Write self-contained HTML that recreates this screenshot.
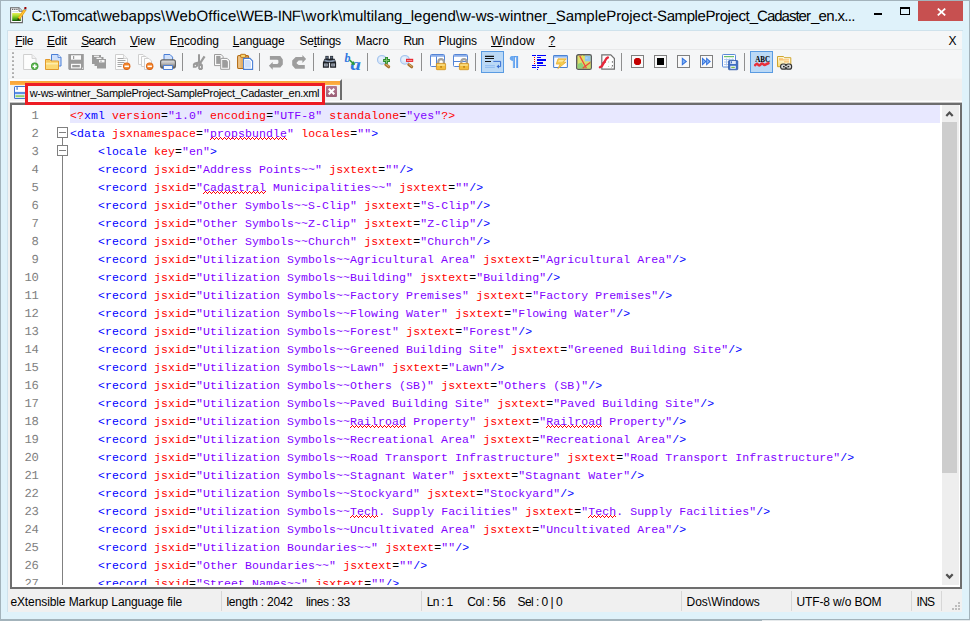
<!DOCTYPE html>
<html><head><meta charset="utf-8"><title>Notepad++</title>
<style>
*{box-sizing:border-box;margin:0;padding:0}
html,body{width:970px;height:621px;overflow:hidden}
body{background:#dff2fa;font-family:"Liberation Sans",sans-serif;position:relative;color:#000}
.abs{position:absolute}
#frame{left:0;top:0;width:970px;height:621px;border:1px solid #a3b3bb;border-bottom-width:2px;pointer-events:none}
#title{left:31.400px;top:5px;font-size:15px;letter-spacing:-.18px;line-height:22px;white-space:nowrap;color:#000}
#appicon{left:10px;top:7px}
#btnclose{left:918px;top:1px;width:45px;height:20px;background:#c75050}
#client{left:8px;top:31px;width:954px;height:581px;background:#f0f0f0;overflow:hidden}
#menubar{left:0;top:0;width:954px;height:19px;background:#f5f6f7;border-bottom:1px solid #e8e9ea}
#menubar span{position:absolute;top:3px;font-size:12px;line-height:15px;white-space:nowrap}
#menubar span em{font-style:normal;text-decoration:underline}
#toolbar{left:0;top:19px;width:954px;height:28px;background:#f5f6f7}
.ic{position:absolute;overflow:visible}
.sep{position:absolute;top:3px;width:1px;height:18px;background:#8f8f8f}
.grip{position:absolute;left:4px;top:2px;width:2px;height:26px;background:repeating-linear-gradient(#c6c6c6 0,#a4a4a4 2px,transparent 2px,transparent 4px)}
.pressed{position:absolute;top:1px;width:23px;height:22px;background:#bbd9f6;border:1px solid #5a9be2}
#tabbar{left:0;top:47px;width:954px;height:25px;background:#f0f0f0;box-shadow:inset 0 1px 0 #f3f4f4}
#tabline{left:2px;top:22px;width:952px;height:3px;background:linear-gradient(#f6f6f6 0,#f6f6f6 1px,#fff 1px,#fff 2px,#c4c4c4 2px)}
#tab{left:1px;top:1px;width:333px;height:23px;background:#f2f3f3;border-right:2px solid #6c6c6c;border-left:1px solid #fcfcfc;border-top:2px solid #fdfdfd}
#tabtop{left:2px;top:3px;width:330px;height:4px;background:linear-gradient(#f9a63a,#fca93c 60%,#ffb64f)}
#tabtxt{left:21.700px;top:8px;font-size:11px;letter-spacing:-.3px;line-height:14px;white-space:nowrap;color:#000}
#redbox{left:17px;top:5px;width:300px;height:22px;border:3px solid #ed1c24;z-index:5}
#tabclose{left:318px;top:8px;width:11px;height:11px;background:linear-gradient(#b47a92,#9a5d74);border-radius:1px}
#editor{left:2px;top:72px;width:952px;height:486px;background:#fff;border:2px solid #6e6e6e;overflow:hidden}
#view{left:0;top:0;width:947px;height:480px;overflow:hidden}
#hl{left:58px;top:0;width:870px;height:18px;background:#e8e8ff}
#code{position:absolute;left:0;top:2px;width:929px;font-family:"Liberation Mono",monospace;font-size:11.5px;letter-spacing:.1px;line-height:18px;white-space:pre;color:#000}
.ln{height:18px;padding-left:58px;position:relative}
.ln .n{position:absolute;left:0;top:0;width:26.4px;text-align:right;color:#808080;font-size:12.2px;letter-spacing:-.32px;text-rendering:geometricPrecision}
.ln b{font-weight:normal;color:#0000ff}
.ln s{text-decoration:none;color:#ff0000}
.ln i{font-style:normal;color:#8000ff}
.ln u{text-decoration:none}
.sq{position:absolute;height:3px;background:
 linear-gradient(90deg,transparent 2px,#ff0000 2px,#ff0000 3px,transparent 3px) 0 0/4px 1px repeat-x,
 linear-gradient(90deg,transparent 1px,#ff0000 1px,#ff0000 2px,transparent 2px,transparent 3px,#ff0000 3px) 0 1px/4px 1px repeat-x,
 linear-gradient(90deg,#ff0000 1px,transparent 1px) 0 2px/4px 1px repeat-x}
#vscroll{left:930px;top:0;width:17px;height:480px;background:#eeeeee}
#thumb{left:0;top:17px;width:15px;height:351px;background:#cdcdcd}
#fold{left:45px;top:0;width:12px;height:482px}
#status{left:0;top:558px;height:23px;width:954px;height:23px;background:#f0f0f0;font-size:12px;line-height:15px}
#status span{position:absolute;top:6px;white-space:nowrap}
#status i{position:absolute;top:2px;width:1px;height:20px;background:#d7d7d7}
</style></head><body>
<svg id="appicon" class="abs" width="18" height="17" viewBox="0 0 18 17"><defs><linearGradient id="gg" x1="0" y1="0" x2="0" y2="1"><stop offset="0" stop-color="#e8ec58"/><stop offset=".35" stop-color="#a6dc2c"/><stop offset=".8" stop-color="#3c9a10"/><stop offset="1" stop-color="#0c4a04"/></linearGradient></defs><path d="M.6 .8h8.400l3.400 3.400v11.400h-11.800z" fill="#fff" stroke="#666" stroke-width="1.100"/><path d="M9 .8v3.400h3.400" fill="#f2f2f2" stroke="#666" stroke-width="1"/><path d="M2.200 2.400h1.100M4.300 2.400h1.100M6.400 2.400h1.100" stroke="#444" stroke-width="1.200"/><path d="M2.400 4.600h5.800" stroke="#c4ccd8" stroke-width=".8"/><rect x="2.200" y="6" width="8.600" height="8" fill="url(#gg)"/><path d="M15.400 2.200l-6.600 9.600" stroke="#f5a80a" stroke-width="2.700"/><path d="M14.700 3.300l-5.300 7.700" stroke="#ffd45a" stroke-width=".8"/><path d="M13.900 2.200l2 1.400.8-1.200-2-1.400z" fill="#7c9cc8"/><rect x="14.400" y="0" width="2" height="2" fill="#9c0000"/><path d="M7.800 11l1.900 1.300-2.300 1.200z" fill="#3a2a10"/></svg>
<svg class="abs" style="left:0;top:0" width="870" height="30" font-family="Liberation Sans" font-size="15" text-rendering="geometricPrecision" fill="#000"><text x="31.4" y="20.8" textLength="65.4" lengthAdjust="spacing">C:\Tomcat</text><text x="96.8" y="20.8" textLength="64.3" lengthAdjust="spacing">\webapps</text><text x="161.1" y="20.8" textLength="75.2" lengthAdjust="spacing">\WebOffice</text><text x="236.3" y="20.8" textLength="64.7" lengthAdjust="spacing">\WEB-INF</text><text x="301.0" y="20.8" textLength="37.3" lengthAdjust="spacing">\work</text><text x="338.3" y="20.8" textLength="117.5" lengthAdjust="spacing">\multilang_legend</text><text x="455.8" y="20.8" textLength="99.9" lengthAdjust="spacing">\w-ws-wintner_</text><text x="555.7" y="20.8" textLength="96.8" lengthAdjust="spacing">SampleProject</text><text x="652.5" y="20.8" textLength="97.2" lengthAdjust="spacing">-SampleProject</text><text x="749.7" y="20.8" textLength="61.2" lengthAdjust="spacing">_Cadaster</text><text x="810.9" y="20.8" textLength="44.6" lengthAdjust="spacing">_en.x...</text></svg>
<div class="abs" style="left:874px;top:13px;width:8px;height:2px;background:#000"></div>
<div class="abs" style="left:900px;top:7px;width:10px;height:8px;border:1px solid #000;border-top-width:2px"></div>
<div id="btnclose" class="abs"><svg class="abs" style="left:18.500px;top:6.500px" width="9" height="8" viewBox="0 0 9 8"><path d="M.8 .6l7.400 6.800M8.200 .6l-7.400 6.800" stroke="#fff" stroke-width="1.800"/></svg></div>
<div id="client" class="abs">
 <div id="menubar" class="abs">
  <span style="left:7.200px;letter-spacing:-.34px"><em>F</em>ile</span>
  <span style="left:38.900px;letter-spacing:-.17px"><em>E</em>dit</span>
  <span style="left:73.200px;letter-spacing:-.67px"><em>S</em>earch</span>
  <span style="left:122px;letter-spacing:-.2px"><em>V</em>iew</span>
  <span style="left:161.400px;letter-spacing:-.07px">E<em>n</em>coding</span>
  <span style="left:224.800px;letter-spacing:-.21px"><em>L</em>anguage</span>
  <span style="left:291.600px;letter-spacing:-.27px">Se<em>t</em>tings</span>
  <span style="left:347.800px;letter-spacing:-.07px">Macro</span>
  <span style="left:395.600px;letter-spacing:-.67px">Run</span>
  <span style="left:430.600px;letter-spacing:-.17px">Plugins</span>
  <span style="left:483px;letter-spacing:.22px"><em>W</em>indow</span>
  <span style="left:540.600px"><em>?</em></span>
  <span style="left:940.400px">X</span>
 </div>
 <div id="toolbar" class="abs">
<div class="grip"></div>
<div class="pressed" style="left:473px"></div><div class="pressed" style="left:742px"></div>
<div class="sep" style="left:174px"></div>
<div class="sep" style="left:251px"></div>
<div class="sep" style="left:305px"></div>
<div class="sep" style="left:359px"></div>
<div class="sep" style="left:413px"></div>
<div class="sep" style="left:467px"></div>
<div class="sep" style="left:613px"></div>
<div class="sep" style="left:736px"></div>
<svg class="ic" style="left:15px;top:4px" width="16" height="16" viewBox="0 0 16 16"><path d="M.6 .5h8.400l4 4v11h-12.400z" fill="#fdfdfd" stroke="#cfcfcf"/><path d="M9 .5v4h4" fill="#f1f1f1" stroke="#d6d6d6"/>
<circle cx="11.7" cy="12.3" r="3.7" fill="#3f9a36"/><circle cx="11.7" cy="12.3" r="3.1" fill="#58b04a"/><path d="M11.7 10.2v4.2M9.6 12.3h4.2" stroke="#fff" stroke-width="1.5"/></svg>
<svg class="ic" style="left:37px;top:4px" width="16" height="16" viewBox="0 0 16 16"><path d="M6.500 .5h6.500l3 3v8.500h-9.500z" fill="#cfe0fb" stroke="#4b7fd6"/><path d="M13 .5v3h3" fill="#e9f1ff" stroke="#4b7fd6" stroke-width=".8"/>
<path d="M.5 5.5h4.5l1 1.5h7.5v8.5h-13z" fill="#fbd873" stroke="#e29a2c"/><path d="M1 9h12v1.5h-12z" fill="#fff1b8" opacity=".8"/><path d="M1.5 6.5h3l.8 1h-3.8z" fill="#f4b648"/></svg>
<svg class="ic" style="left:60px;top:4px" width="16" height="16" viewBox="0 0 16 16"><path d="M.3 0h15.500v16h-14.500l-1-1z" fill="#9b9b9b"/><rect x="3" y="1.3" width="10" height="4.4" fill="#fafafa"/><rect x="5" y="2" width="1.2" height="3" fill="#9b9b9b"/>
<rect x="3" y="9.8" width="10" height="4.6" fill="#fafafa"/><rect x="4.2" y="11" width="7.6" height="2.3" fill="#9b9b9b"/><rect x="14" y="13.7" width="1" height="1" fill="#fff"/></svg>
<svg class="ic" style="left:84px;top:4px" width="16" height="16" viewBox="0 0 16 16"><g fill="#9b9b9b"><rect x="0" y="1" width="9" height="9"/><rect x="2.5" y="3" width="9" height="9"/><rect x="5" y="5" width="9" height="9.5"/></g>
<rect x="2" y="1.7" width="5" height="1.2" fill="#f4f4f4"/><rect x="4.5" y="3.7" width="5" height="1.3" fill="#f4f4f4"/><rect x="7" y="6" width="5.5" height="2.4" fill="#f7f7f7"/><rect x="8.5" y="6.5" width="1" height="1.5" fill="#9b9b9b"/></svg>
<svg class="ic" style="left:107px;top:4px" width="16" height="16" viewBox="0 0 16 16"><path d="M.5 .5h8l4 4v11h-12z" fill="#fdfdfd" stroke="#cfcfcf"/><path d="M8.500 .5v4h4" fill="#f1f1f1" stroke="#d6d6d6"/>
<path d="M2.5 4.500h6M2.500 6.500h8M2.500 8.500h7M2.500 10.500h5M2.500 12.500h4" stroke="#9d9d9d" stroke-width=".9"/>
<circle cx="11.700" cy="12.3" r="3.7" fill="#d95e10"/><circle cx="11.7" cy="12.100" r="3" fill="#f08228"/><rect x="9.5" y="11.5" width="4.4" height="1.600" fill="#fff"/></svg>
<svg class="ic" style="left:130px;top:4px" width="16" height="16" viewBox="0 0 16 16"><g fill="#fdfdfd" stroke="#cfcfcf"><path d="M.5 .5h4.500l2.500 2.500v7.500h-7z"/><path d="M3.500 2.500h4.500l2.500 2.500v7.500h-7z"/><path d="M6.500 4.500h4.500l2.500 2.500v8.500h-7z"/></g>
<circle cx="11.700" cy="12.300" r="3.700" fill="#d95e10"/><circle cx="11.700" cy="12.100" r="3" fill="#f08228"/><rect x="9.500" y="11.500" width="4.400" height="1.600" fill="#fff"/></svg>
<svg class="ic" style="left:152px;top:4px" width="16" height="16" viewBox="0 0 16 16"><defs><linearGradient id="prg" x1="0" y1="0" x2="0" y2="1"><stop offset="0" stop-color="#e6e6e6"/><stop offset=".45" stop-color="#b8b8b8"/><stop offset=".7" stop-color="#8c8c8c"/><stop offset="1" stop-color="#4a4a4a"/></linearGradient></defs>
<path d="M4 .5h6l2.600 2.600v4.400h-8.600z" fill="#cfe0fb" stroke="#4b7fd6"/>
<rect x=".6" y="5.900" width="14.800" height="8.200" rx="2" fill="url(#prg)" stroke="#606060" stroke-width="1.100"/>
<path d="M3.500 11.500h9v4h-9z" fill="#f4f8ff" stroke="#4b7fd6"/></svg>
<svg class="ic" style="left:183px;top:4px" width="16" height="16" viewBox="0 0 16 16"><g fill="#9a9a9a"><path d="M7 .2h2v9.600h-2z"/><path d="M12.600 1.700l1.900 1.300-4.500 6.800-1.800-1.200z"/>
<path d="M7.400 7.400l-3.800 1.200-1.700 1.400v3.700h3.100l2.400-1.700z"/><path d="M7.200 9.200l3-.2 1.700 1.800v4l-1.100 1.100h-2.600l-1-1.300z"/></g>
<circle cx="4.300" cy="11.500" r=".65" fill="#f5f6f7"/><ellipse cx="9.500" cy="13" rx=".6" ry=".95" fill="#f5f6f7"/></svg>
<svg class="ic" style="left:206px;top:4px" width="16" height="16" viewBox="0 0 16 16"><path d="M.5 .5h6.700l1.900 2.100v9h-8.600z" fill="#fafafa" stroke="#9d9d9d"/><path d="M2.200 1.900h4.300v8h-4.300z" fill="#9d9d9d"/>
<path d="M6.700 4.400h6.500l2.400 2.400v8.500h-8.900z" fill="#fafafa" stroke="#9d9d9d"/><path d="M8.200 6.100h4.200l1.500 1.500v6.200h-5.700z" fill="#9d9d9d"/></svg>
<svg class="ic" style="left:229px;top:4px" width="16" height="16" viewBox="0 0 16 16"><defs><linearGradient id="pg" x1="0" x2="1"><stop offset="0" stop-color="#f4d29c"/><stop offset=".4" stop-color="#e3ad66"/><stop offset="1" stop-color="#d49446"/></linearGradient></defs>
<rect x=".6" y="1.500" width="11" height="13" rx="1.300" fill="url(#pg)" stroke="#b36b14" stroke-width="1.100"/><rect x="3.400" y=".3" width="5.400" height="3" rx=".9" fill="#e9a23a" stroke="#b36b14" stroke-width=".8"/><rect x="4.300" y="1.100" width="3.600" height="1.700" fill="#fbe27a"/>
<path d="M6.600 4.400h6.400l2.600 2.600v8.400h-9z" fill="#fff" stroke="#4a7fd6" stroke-width="1.100"/><path d="M8 6h4.300l1.700 1.700v6.100h-6z" fill="#cfe0fc"/></svg>
<svg class="ic" style="left:260px;top:4px" width="16" height="16" viewBox="0 0 16 16"><path d="M1.900 1.900H12.300L14.800 5.400V10.400L12.300 13.400H4.700V15.800L.9 11.800L4.700 8.100V9.900H9.400L10.400 8.900V6.600L9.400 5.700H1.900Z" fill="#9d9d9d"/></svg>
<svg class="ic" style="left:283px;top:4px" width="16" height="16" viewBox="0 0 16 16"><path d="M11.400 .9L15.100 4.900L11.400 8.900V6.600H7.700L5.700 8.400V9.400L7.700 11.100H13.800V14.800H4.200L1.200 11.300V6.400L4.700 2.900H11.400Z" fill="#9d9d9d"/></svg>
<svg class="ic" style="left:314px;top:4px" width="16" height="16" viewBox="0 0 16 16"><g fill="#1d2127"><rect x="3.400" y="1.900" width="3.200" height="4"/><rect x="8.100" y="1.900" width="3" height="4"/><path d="M2.500 4.800h10.200l1.400 3.600v5.400h-6v-5h-1.200v5h-6v-5.400z"/></g>
<path d="M3.900 2.500h2.200v2h-2.200zM8.600 2.500h2v2h-2z" fill="#5d6b7e"/><path d="M2.700 5.600q4.800 2 9.800 0l.6 1.600q-5.500 1.800-11 0z" fill="#8797ad"/>
<rect x="2" y="9.500" width="3.800" height="2.900" fill="#a9b1bc"/><rect x="9.200" y="9.500" width="3.800" height="2.900" fill="#a9b1bc"/><path d="M3.200 9.500v2.900M4.600 9.500v2.900M10.400 9.500v2.900M11.800 9.500v2.900" stroke="#5a626e" stroke-width=".6"/></svg>
<svg class="ic" style="left:337px;top:4px" width="16" height="16" viewBox="0 0 16 16"><text x="-.4" y="8" font-family="Liberation Serif" font-style="italic" font-weight="bold" font-size="12" fill="#2f78e0">b</text>
<text x="5.600" y="15.600" font-family="Liberation Serif" font-style="italic" font-weight="bold" font-size="17" fill="#2f78e0" textLength="10.400" lengthAdjust="spacingAndGlyphs">a</text>
<path d="M4.600 6.200l3.400 3" stroke="#2e9a3a" stroke-width="1.600"/><path d="M5.700 10.600l4.200.4-1-4.100z" fill="#2e9a3a"/></svg>
<svg class="ic" style="left:368px;top:4px" width="16" height="16" viewBox="0 0 16 16"><path d="M9.800 10.600l2.900 2.200" stroke="#a8722e" stroke-width="3" stroke-linecap="round"/><path d="M10 10.300l2.900 2.200" stroke="#dcae6c" stroke-width="1" stroke-linecap="round"/>
<circle cx="5.900" cy="5.850" r="4.400" fill="#d6e5f8" stroke="#a4c4ee" stroke-width="1.100"/><circle cx="5.200" cy="5.200" r="2.400" fill="#e6effb"/>
<path d="M7.100 5.100h2v-2.100h2.900v2.100h2v2.800h-2v1.800h-2.900v-1.800h-2z" fill="#2b8a2b"/><path d="M7.900 6.500h5.300M10.550 3.800v5.100" stroke="#7cc46e" stroke-width="1.100"/></svg>
<svg class="ic" style="left:391px;top:4px" width="16" height="16" viewBox="0 0 16 16"><path d="M9.800 10.600l2.900 2.200" stroke="#a8722e" stroke-width="3" stroke-linecap="round"/><path d="M10 10.300l2.900 2.200" stroke="#dcae6c" stroke-width="1" stroke-linecap="round"/>
<circle cx="5.900" cy="5.850" r="4.400" fill="#d6e5f8" stroke="#a4c4ee" stroke-width="1.100"/><circle cx="5.200" cy="5.200" r="2.400" fill="#e6effb"/>
<rect x="7" y="4.800" width="7.200" height="3.100" fill="#e8222c"/><rect x="7.900" y="5.900" width="5.400" height="1" fill="#ff9a9a"/></svg>
<svg class="ic" style="left:422px;top:4px" width="16" height="16" viewBox="0 0 16 16"><rect x=".5" y=".5" width="14" height="12" rx="1" fill="#fff" stroke="#5585d6"/><rect x="1" y="1" width="13" height="1.800" fill="#8eb0ea"/><path d="M6.500 2.500v10" stroke="#5585d6"/><path d="M8.300 9.700v-1.700a2.800 2.800 0 0 1 5.600 0v1.700" fill="none" stroke="#a2a2a2" stroke-width="2.200"/><rect x="6.400" y="9.400" width="9.200" height="6.300" rx=".6" fill="#f2bc3c" stroke="#d0901a" stroke-width=".8"/><rect x="7.200" y="10.300" width="7.600" height="1.500" fill="#fbe08a"/><rect x="10.300" y="12" width="1.500" height="1.800" fill="#b87d10"/></svg>
<svg class="ic" style="left:445px;top:4px" width="16" height="16" viewBox="0 0 16 16"><rect x=".5" y=".5" width="14" height="12" rx="1" fill="#fff" stroke="#5585d6"/><rect x="1" y="1" width="13" height="1.800" fill="#8eb0ea"/><path d="M.5 7.500h14" stroke="#5585d6"/><path d="M8.300 9.700v-1.700a2.800 2.800 0 0 1 5.600 0v1.700" fill="none" stroke="#a2a2a2" stroke-width="2.200"/><rect x="6.400" y="9.400" width="9.200" height="6.300" rx=".6" fill="#f2bc3c" stroke="#d0901a" stroke-width=".8"/><rect x="7.200" y="10.300" width="7.600" height="1.500" fill="#fbe08a"/><rect x="10.300" y="12" width="1.500" height="1.800" fill="#b87d10"/></svg>
<svg class="ic" style="left:477px;top:4px" width="16" height="16" viewBox="0 0 16 16"><path d="M0 2.400h9M0 4.500h9M0 7.500h6" stroke="#151515" stroke-width="1.100"/><path d="M8.300 7.400h7.300v5.200h-2" fill="none" stroke="#3a6fd0" stroke-width="1"/><path d="M11.500 12.500l2.500-2v4z" fill="#3a6fd0"/><rect x="0" y="11.200" width="9.800" height="2.700" fill="#8fbcf0"/><rect x="0" y="12.200" width="9.800" height=".7" fill="#c4dcf8"/></svg>
<svg class="ic" style="left:499px;top:4px" width="16" height="16" viewBox="0 0 16 16"><path d="M5.900 1.900h5.200v12.200h-2v-10.800h-1.200v10.800h-2z" fill="#5a9cec"/><path d="M6.300 1.900a2.900 2.400 0 0 0 0 4.800z" fill="#5a9cec"/><path d="M6.300 1.900h-.5a3 2.400 0 0 0 0 4.800h.5z" fill="#6aa8f0"/><path d="M6.500 2.400v11.400M9.700 2.400v11.400" stroke="#8fc0f8" stroke-width=".6"/></svg>
<svg class="ic" style="left:522px;top:4px" width="16" height="16" viewBox="0 0 16 16"><g fill="#0000ff" shape-rendering="crispEdges"><rect x="2" y="1" width="4" height="1"/><rect x="7" y="1" width="9" height="1"/><rect x="7" y="3" width="4" height="1"/><rect x="7" y="5" width="9" height="2"/><rect x="7" y="8" width="6" height="2"/><rect x="2" y="11" width="4" height="1"/><rect x="7" y="11" width="9" height="1"/><rect x="2" y="13" width="4" height="1"/><rect x="7" y="13" width="2" height="1"/><rect x="7" y="15" width="1" height="1"/></g>
<g fill="#ff0000" shape-rendering="crispEdges"><rect x="4" y="3" width="1" height="1"/><rect x="4" y="5" width="1" height="1"/><rect x="4" y="7" width="1" height="1"/><rect x="4" y="9" width="1" height="1"/></g></svg>
<svg class="ic" style="left:545px;top:4px" width="16" height="16" viewBox="0 0 16 16"><rect x=".6" y="1.500" width="13.800" height="12" rx=".8" fill="#fdfdfd" stroke="#4a82d4" stroke-width="1.100"/><rect x="1.100" y="2" width="12.800" height="1.600" fill="#8ab4ee"/>
<path d="M5 4.800h8.300l-3 3.400h2.700l-8.200 6.500 2.400-4.600h-4z" fill="#f4cc52" stroke="#e2a62c" stroke-width=".7"/><path d="M6 6h5l-1.600 1.800h-4.600z" fill="#fbe69a"/></svg>
<svg class="ic" style="left:568px;top:4px" width="16" height="16" viewBox="0 0 16 16"><rect x=".7" y=".7" width="14.600" height="14.600" rx="1.600" fill="#dce06c" stroke="#5b5b5e" stroke-width="1.400"/><rect x="8.900" y="1.700" width="5.600" height="5.600" fill="#90c4ee"/><path d="M1.500 10l4-1.500 4 6h-8z" fill="#8fd07a"/><rect x="9.500" y="9" width="5" height="5.500" fill="#c9dc6a"/><path d="M6.500 1.500v5" stroke="#e8e050" stroke-width="1"/><rect x="9.500" y="3" width="2" height="2" fill="#a8d4f4"/>
<path d="M3.700 1.900l6.700 12.300M14.100 8.600l-7.400 5.600" stroke="#ee4a3c" stroke-width="1.300" fill="none"/></svg>
<svg class="ic" style="left:591px;top:4px" width="16" height="16" viewBox="0 0 16 16"><path d="M2.800 .9h9l3.600 3.600v10.600h-12.600z" fill="#fdfdfd" stroke="#707070" stroke-width="1.200"/>
<path d="M13.400 7.200v2M13.400 11v1.800l-1 .6" stroke="#555" stroke-width=".9" fill="none" stroke-dasharray="1.500 1"/><path d="M9.600 7.500v1M9.600 12v1" stroke="#9c9" stroke-width=".9"/>
<path d="M.9 13.200l1.800-.9 4.700-7.800 1.500-1" fill="none" stroke="#e6283a" stroke-width="2.400" stroke-linecap="round" stroke-linejoin="round"/><path d="M3.200 9.200l3.600-1.400" stroke="#e6283a" stroke-width="1.500"/></svg>
<svg class="ic" style="left:623px;top:5px" width="13" height="13" viewBox="0 0 13 13"><rect x=".5" y=".5" width="12" height="12" fill="#f9f9f9" stroke="#7f7f7f"/><path d="M4.800 3h3.400l1.800 1.800v3.400l-1.800 1.800h-3.400l-1.800-1.800v-3.400z" fill="#c40000"/></svg>
<svg class="ic" style="left:646px;top:5px" width="13" height="13" viewBox="0 0 13 13"><rect x=".5" y=".5" width="12" height="12" fill="#f9f9f9" stroke="#7f7f7f"/><rect x="3" y="3" width="7" height="7" fill="#000"/></svg>
<svg class="ic" style="left:669px;top:5px" width="13" height="13" viewBox="0 0 13 13"><rect x=".5" y=".5" width="12" height="12" fill="#f9f9f9" stroke="#7f7f7f"/><path d="M4.800 2.200l5.300 4.300-5.300 4.300z" fill="#2f6fdc"/><path d="M5.700 4.200l2.900 2.300-2.900 2.300z" fill="#7fb0f4"/></svg>
<svg class="ic" style="left:692px;top:5px" width="13" height="13" viewBox="0 0 13 13"><rect x=".5" y=".5" width="12" height="12" fill="#f9f9f9" stroke="#7f7f7f"/><path d="M2 2.200l4.600 4.300-4.600 4.300z" fill="#2f6fdc"/><path d="M6.100 2.200l4.800 4.300-4.800 4.300z" fill="#2f6fdc"/><path d="M2.800 4.200l2.400 2.300-2.400 2.300z" fill="#7fb0f4"/><path d="M6.900 4.200l2.500 2.300-2.500 2.300z" fill="#7fb0f4"/></svg>
<svg class="ic" style="left:714px;top:4px" width="16" height="16" viewBox="0 0 16 16"><rect x=".5" y=".5" width="13" height="12.500" rx=".8" fill="#fdfdfd" stroke="#5a8ad8"/><rect x="2" y="2" width="10" height="1.200" fill="#6cc06c"/>
<path d="M2 5.500h10M2 8h10M2 10.500h5M4.500 4.500v7M7.500 4.500v7M10.500 4.500v3" stroke="#a9c4ee" stroke-width=".9"/>
<rect x="6.500" y="6.500" width="9.300" height="9.300" rx=".8" fill="#3f6ec2" stroke="#2c55a4" stroke-width=".7"/><rect x="8.300" y="7" width="5.500" height="3" fill="#dfe9fa"/><rect x="9" y="7.300" width="1" height="2" fill="#3f6ec2"/><rect x="8.300" y="11.800" width="5.500" height="3" fill="#eef3fc"/><rect x="9.300" y="12.800" width="3.500" height="1.200" fill="#7cc24e"/></svg>
<svg class="ic" style="left:746px;top:4px" width="16" height="16" viewBox="0 0 16 16"><text x="1.200" y="7.700" font-family="Liberation Serif" font-weight="bold" font-size="8.600" fill="#000" textLength="15" lengthAdjust="spacingAndGlyphs">ABC</text>
<path d="M1.200 11.200q1.300-2.400 2.700-.6t2.700 0 2.600-.5 2.600.4 2.700-1.300" fill="none" stroke="#e8303a" stroke-width="2.500" stroke-linecap="round"/></svg>
<svg class="ic" style="left:769px;top:4px" width="16" height="16" viewBox="0 0 16 16"><defs><linearGradient id="flg" x1="1" y1="0" x2="0" y2="1"><stop offset="0" stop-color="#fffdf2"/><stop offset=".6" stop-color="#fdf0c0"/><stop offset="1" stop-color="#f8d66a"/></linearGradient></defs>
<path d="M.5 2.500h6l1 1.200h6.300v9h-13.300z" fill="url(#flg)" stroke="#cfa62e"/><path d="M2 4.900h4M2 5.900h10M7 7.900h5" stroke="#fbb45a" stroke-width="1"/>
<rect x="3.600" y="10" width="5.800" height="5.200" rx="2.300" fill="#dcdcdc" stroke="#333" stroke-width="1.200"/><rect x="8.800" y="10" width="5.800" height="5.200" rx="2.300" fill="#dcdcdc" stroke="#333" stroke-width="1.200"/><rect x="6" y="11.900" width="6.200" height="1.400" fill="#222"/><rect x="7.600" y="12.200" width="3" height=".8" fill="#f4f4f4"/></svg>
 </div>
 <div id="tabbar" class="abs">
  <div id="tab" class="abs"></div>
  <div id="tabtop" class="abs"></div>
  <svg class="abs" style="left:6px;top:8px" width="12" height="13" viewBox="0 0 12 12" preserveAspectRatio="none"><rect x=".5" y=".5" width="11" height="11" rx="1" fill="#e9f1fc" stroke="#3f74d1"/><rect x="1" y="1" width="10" height="4" fill="#fff"/><rect x="2.500" y="1" width="1.200" height="2.500" fill="#3f74d1"/><rect x="1" y="5.500" width="10" height="2" fill="#5a8fe6"/><rect x="1.500" y="8.500" width="9" height="1.800" fill="#8fcf6a"/></svg>
  <div id="tabtxt" class="abs">w-ws-wintner_SampleProject-SampleProject_Cadaster_en.xml</div>
  <div id="tabclose" class="abs"><svg class="abs" style="left:2px;top:2px" width="7" height="7" viewBox="0 0 7 7"><path d="M.7 .7l5.600 5.600M6.300 .7l-5.600 5.600" stroke="#fff" stroke-width="2.100"/></svg></div>
  <div id="tabline" class="abs"></div>
  <div id="redbox" class="abs"></div>
 </div>
 <div id="editor" class="abs"><div id="view" class="abs">
  <div id="hl" class="abs"></div>
  <svg id="fold" class="abs" viewBox="0 0 12 482" shape-rendering="crispEdges"><g fill="#fff" stroke="#808080"><path d="M5.500 33v449"/><rect x=".5" y="22.500" width="10" height="10"/><rect x=".5" y="40.500" width="10" height="10"/></g><path d="M2 27.500h7M2 45.500h7" stroke="#808080"/></svg>
  <div id="code"><div class="ln cur"><span class="n">1</span><s>&lt;?</s><b>xml</b> <s>version</s>=<i>"1.0"</i> <s>encoding</s>=<i>"UTF-8"</i> <s>standalone</s>=<i>"yes"</i><s>?&gt;</s></div><div class="ln"><span class="n">2</span><b>&lt;data</b> <s>jsxnamespace</s>=<i>"<u>propsbundle</u>"</i> <s>locales</s>=<i>""</i><b>&gt;</b></div><div class="ln"><span class="n">3</span>    <b>&lt;locale</b> <s>key</s>=<i>"en"</i><b>&gt;</b></div><div class="ln"><span class="n">4</span>    <b>&lt;record</b> <s>jsxid</s>=<i>"Address Points~~"</i> <s>jsxtext</s>=<i>""</i><b>/&gt;</b></div><div class="ln"><span class="n">5</span>    <b>&lt;record</b> <s>jsxid</s>=<i>"<u>Cadastral</u> Municipalities~~"</i> <s>jsxtext</s>=<i>""</i><b>/&gt;</b></div><div class="ln"><span class="n">6</span>    <b>&lt;record</b> <s>jsxid</s>=<i>"Other Symbols~~S-Clip"</i> <s>jsxtext</s>=<i>"S-Clip"</i><b>/&gt;</b></div><div class="ln"><span class="n">7</span>    <b>&lt;record</b> <s>jsxid</s>=<i>"Other Symbols~~Z-Clip"</i> <s>jsxtext</s>=<i>"Z-Clip"</i><b>/&gt;</b></div><div class="ln"><span class="n">8</span>    <b>&lt;record</b> <s>jsxid</s>=<i>"Other Symbols~~Church"</i> <s>jsxtext</s>=<i>"Church"</i><b>/&gt;</b></div><div class="ln"><span class="n">9</span>    <b>&lt;record</b> <s>jsxid</s>=<i>"Utilization Symbols~~Agricultural Area"</i> <s>jsxtext</s>=<i>"Agricultural Area"</i><b>/&gt;</b></div><div class="ln"><span class="n">10</span>    <b>&lt;record</b> <s>jsxid</s>=<i>"Utilization Symbols~~Building"</i> <s>jsxtext</s>=<i>"Building"</i><b>/&gt;</b></div><div class="ln"><span class="n">11</span>    <b>&lt;record</b> <s>jsxid</s>=<i>"Utilization Symbols~~Factory Premises"</i> <s>jsxtext</s>=<i>"Factory Premises"</i><b>/&gt;</b></div><div class="ln"><span class="n">12</span>    <b>&lt;record</b> <s>jsxid</s>=<i>"Utilization Symbols~~Flowing Water"</i> <s>jsxtext</s>=<i>"Flowing Water"</i><b>/&gt;</b></div><div class="ln"><span class="n">13</span>    <b>&lt;record</b> <s>jsxid</s>=<i>"Utilization Symbols~~Forest"</i> <s>jsxtext</s>=<i>"Forest"</i><b>/&gt;</b></div><div class="ln"><span class="n">14</span>    <b>&lt;record</b> <s>jsxid</s>=<i>"Utilization Symbols~~Greened Building Site"</i> <s>jsxtext</s>=<i>"Greened Building Site"</i><b>/&gt;</b></div><div class="ln"><span class="n">15</span>    <b>&lt;record</b> <s>jsxid</s>=<i>"Utilization Symbols~~Lawn"</i> <s>jsxtext</s>=<i>"Lawn"</i><b>/&gt;</b></div><div class="ln"><span class="n">16</span>    <b>&lt;record</b> <s>jsxid</s>=<i>"Utilization Symbols~~Others (SB)"</i> <s>jsxtext</s>=<i>"Others (SB)"</i><b>/&gt;</b></div><div class="ln"><span class="n">17</span>    <b>&lt;record</b> <s>jsxid</s>=<i>"Utilization Symbols~~Paved Building Site"</i> <s>jsxtext</s>=<i>"Paved Building Site"</i><b>/&gt;</b></div><div class="ln"><span class="n">18</span>    <b>&lt;record</b> <s>jsxid</s>=<i>"Utilization Symbols~~<u>Railroad</u> Property"</i> <s>jsxtext</s>=<i>"<u>Railroad</u> Property"</i><b>/&gt;</b></div><div class="ln"><span class="n">19</span>    <b>&lt;record</b> <s>jsxid</s>=<i>"Utilization Symbols~~Recreational Area"</i> <s>jsxtext</s>=<i>"Recreational Area"</i><b>/&gt;</b></div><div class="ln"><span class="n">20</span>    <b>&lt;record</b> <s>jsxid</s>=<i>"Utilization Symbols~~Road Transport Infrastructure"</i> <s>jsxtext</s>=<i>"Road Transport Infrastructure"</i><b>/&gt;</b></div><div class="ln"><span class="n">21</span>    <b>&lt;record</b> <s>jsxid</s>=<i>"Utilization Symbols~~Stagnant Water"</i> <s>jsxtext</s>=<i>"Stagnant Water"</i><b>/&gt;</b></div><div class="ln"><span class="n">22</span>    <b>&lt;record</b> <s>jsxid</s>=<i>"Utilization Symbols~~Stockyard"</i> <s>jsxtext</s>=<i>"Stockyard"</i><b>/&gt;</b></div><div class="ln"><span class="n">23</span>    <b>&lt;record</b> <s>jsxid</s>=<i>"Utilization Symbols~~<u>Tech</u>. Supply Facilities"</i> <s>jsxtext</s>=<i>"<u>Tech</u>. Supply Facilities"</i><b>/&gt;</b></div><div class="ln"><span class="n">24</span>    <b>&lt;record</b> <s>jsxid</s>=<i>"Utilization Symbols~~Uncultivated Area"</i> <s>jsxtext</s>=<i>"Uncultivated Area"</i><b>/&gt;</b></div><div class="ln"><span class="n">25</span>    <b>&lt;record</b> <s>jsxid</s>=<i>"Utilization Boundaries~~"</i> <s>jsxtext</s>=<i>""</i><b>/&gt;</b></div><div class="ln"><span class="n">26</span>    <b>&lt;record</b> <s>jsxid</s>=<i>"Other Boundaries~~"</i> <s>jsxtext</s>=<i>""</i><b>/&gt;</b></div><div class="ln"><span class="n">27</span>    <b>&lt;record</b> <s>jsxid</s>=<i>"Street Names~~"</i> <s>jsxtext</s>=<i>""</i><b>/&gt;</b></div></div>
<div class="sq" style="left:198px;top:32px;width:77px"></div><div class="sq" style="left:191px;top:86px;width:63px"></div><div class="sq" style="left:338px;top:320px;width:56px"></div><div class="sq" style="left:534px;top:320px;width:56px"></div><div class="sq" style="left:338px;top:410px;width:28px"></div><div class="sq" style="left:576px;top:410px;width:28px"></div>
  <div id="vscroll" class="abs"><div id="thumb" class="abs"></div>
   <svg class="abs" style="left:3px;top:5px" width="9" height="7" viewBox="0 0 9 7"><path d="M1.300 6l3.200-3.400 3.200 3.400" fill="none" stroke="#505050" stroke-width="2.200"/></svg>
   <svg class="abs" style="left:3px;top:468px" width="9" height="7" viewBox="0 0 9 7"><path d="M1.300 1.200l3.200 3.400 3.200-3.400" fill="none" stroke="#505050" stroke-width="2.200"/></svg>
  </div>
 </div></div>
 <div id="status" class="abs">
  <span style="left:2.400px;letter-spacing:-.1px">eXtensible Markup Language file</span>
  <i style="left:213px"></i>
  <span style="left:218.400px;letter-spacing:-.23px">length : 2042</span><span style="left:298px;letter-spacing:-.43px">lines : 33</span>
  <i style="left:413px"></i>
  <span style="left:418.800px;letter-spacing:-.74px">Ln : 1</span><span style="left:459.200px;letter-spacing:-.42px">Col : 56</span><span style="left:509.500px;letter-spacing:-.54px">Sel : 0 | 0</span>
  <i style="left:673px"></i>
  <span style="left:678.500px">Dos\Windows</span>
  <i style="left:783px"></i>
  <span style="left:788.500px;letter-spacing:-.13px">UTF-8 w/o BOM</span>
  <i style="left:903px"></i>
  <span style="left:908.600px;letter-spacing:-.8px">INS</span>
  <i style="left:933px"></i>
  <svg class="abs" style="left:944px;top:13px" width="9" height="9" viewBox="0 0 9 9" shape-rendering="crispEdges"><g fill="#bdbdbd"><rect x="6" y="0" width="2" height="2"/><rect x="3" y="3" width="2" height="2"/><rect x="6" y="3" width="2" height="2"/><rect x="0" y="6" width="2" height="2"/><rect x="3" y="6" width="2" height="2"/><rect x="6" y="6" width="2" height="2"/></g></svg>
 </div>
</div>
<div class="abs" style="left:7px;top:30px;width:1px;height:582px;background:#cfe2ec"></div><div class="abs" style="left:7px;top:30px;width:956px;height:1px;background:#cfe2ec"></div>
<div id="frame" class="abs"></div>
<div class="abs" style="left:762px;top:620px;width:208px;height:1px;background:#e6eaec"></div>
</body></html>
